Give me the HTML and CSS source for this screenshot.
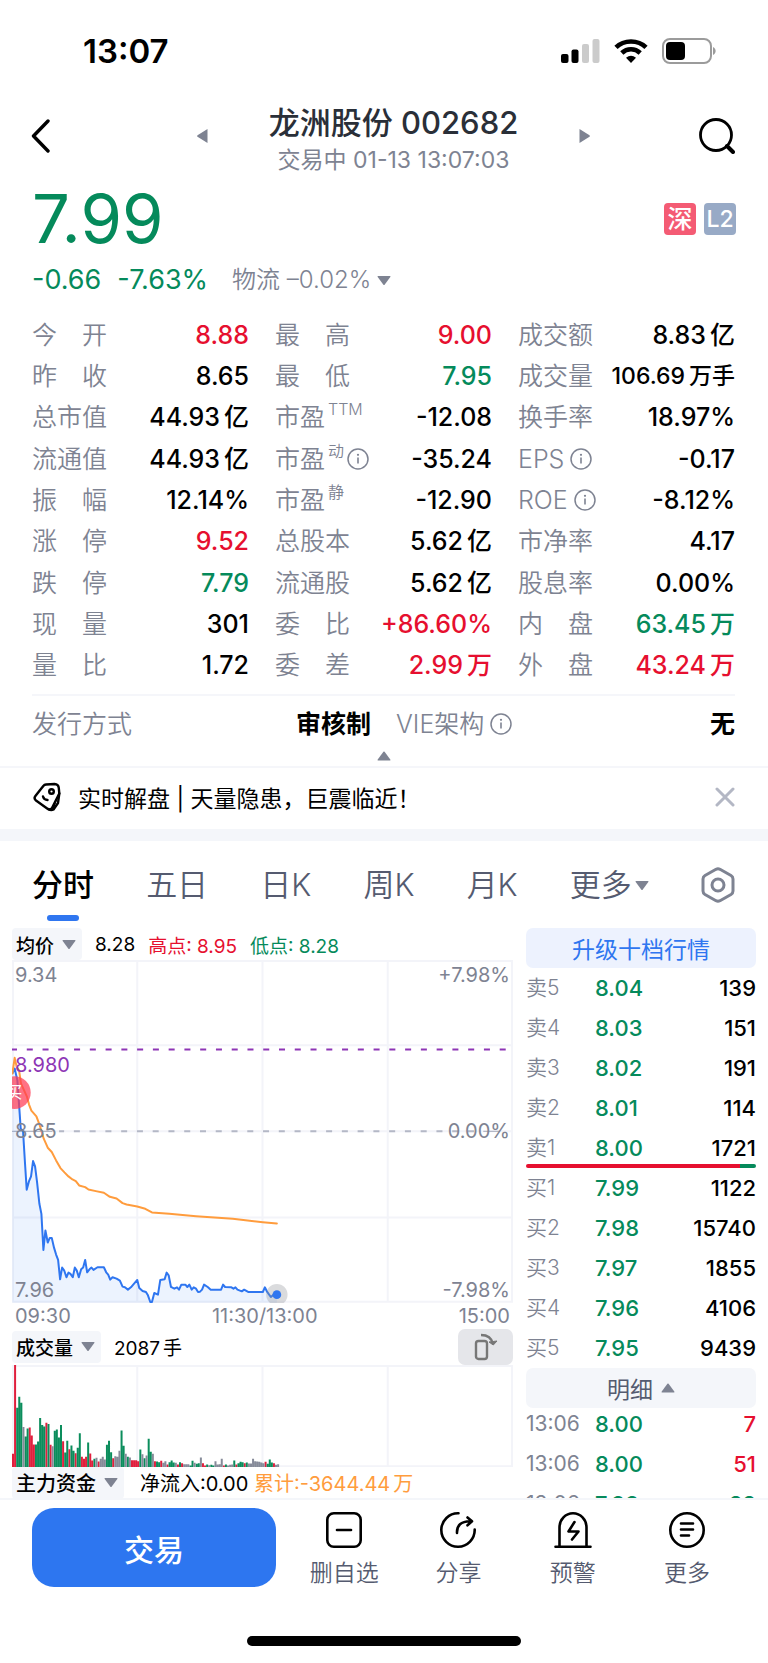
FILE: index.html
```html
<!DOCTYPE html>
<html lang="zh-CN">
<head>
<meta charset="utf-8">
<meta name="viewport" content="width=device-width, initial-scale=1">
<title>龙洲股份 002682</title>
<link rel="stylesheet" href="styles.css">
</head>
<body>
<svg class="defs" aria-hidden="true">
  <symbol id="info" viewBox="0 0 22 22"><circle cx="11" cy="11" r="10" fill="none" stroke="currentColor" stroke-width="1.5"/><path d="M11 9.5v6" stroke="currentColor" stroke-width="1.6"/><circle cx="11" cy="6.8" r="1.1" fill="currentColor"/></symbol>
  <symbol id="down" viewBox="0 0 14 10"><path d="M1 .5h12q.8.2.3 1L7.6 9.2q-.6.6-1.2 0L.7 1.5Q.2.7 1 .5z" fill="currentColor"/></symbol>
  <symbol id="up" viewBox="0 0 14 10"><path d="M1 9.5h12q.8-.2.3-1L7.6.8Q7 .2 6.4.8L.7 8.500Q.2 9.300 1 9.500z" fill="currentColor"/></symbol>
</svg>

<div class="status">
  <span class="clock">13:07</span>
  <span class="status-icons">
    <svg width="39" height="25" viewBox="0 0 39 25"><rect y="15" width="7.500" height="9" rx="2"/><rect x="10.500" y="10.500" width="7" height="13.500" rx="2"/><g fill="#cbcbcb"><rect x="21" y="5" width="7" height="19" rx="2"/><rect x="31.500" y="0" width="7" height="24" rx="2"/></g></svg>
    <svg width="34" height="25" viewBox="0 0 34 25"><g fill="none" stroke="#000" stroke-width="4.600"><path d="M2 8.300C10 .500 24 .500 32 8.300"/><path d="M7.800 14C13 9 21 9 26.200 14"/></g><path d="M17 24l-5-5.200q5-4 10 0z"/></svg>
    <svg width="54" height="26" viewBox="0 0 54 26"><rect x="1" y="1" width="48" height="24" rx="7" fill="none" stroke="#9b9b9b" stroke-width="2"/><rect x="4" y="4" width="19" height="18" rx="4"/><path d="M51 9c3.500 1.500 3.500 6.500 0 8z" fill="#9b9b9b"/></svg>
  </span>
</div>

<header class="header">
  <button class="icon-btn" aria-label="返回"><svg width="20" height="34" viewBox="0 0 20 34"><path d="M17 2L2.500 17 17 32" fill="none" stroke="#000" stroke-width="3.400" stroke-linecap="round" stroke-linejoin="round"/></svg></button>
  <button class="icon-btn prev" aria-label="上一只"><svg width="11" height="14" viewBox="0 0 11 14"><path d="M10.500 0v14L.5 7.800q-.6-.8 0-1.600z" fill="#7e8392"/></svg></button>
  <div class="title">
    <h1>龙洲股份 002682</h1>
    <p>交易中 01-13 13:07:03</p>
  </div>
  <button class="icon-btn next" aria-label="下一只"><svg width="11" height="14" viewBox="0 0 11 14"><path d="M.5 0v14l10-6.200q.6-.8 0-1.600z" fill="#7e8392"/></svg></button>
  <button class="icon-btn" aria-label="搜索"><svg width="36" height="36" viewBox="0 0 36 36"><circle cx="17" cy="17" r="15.500" fill="none" stroke="#000" stroke-width="2.800"/><path d="M28 28l6 6" stroke="#000" stroke-width="4" stroke-linecap="round"/></svg></button>
</header>

<section class="quote">
  <div class="price-row"><strong class="price">7.99</strong><span class="badges"><span class="badge sz">深</span><span class="badge l2">L2</span></span></div>
  <div class="change"><span class="g">-0.66</span><span class="g">-7.63%</span><span class="sector">物流 –0.02% <svg width="14" height="11"><use href="#down"/></svg></span></div>
</section>

<section class="stats">
  <dl>
    <div><dt>今　开</dt><dd class="r">8.88</dd></div>
    <div><dt>昨　收</dt><dd>8.65</dd></div>
    <div><dt>总市值</dt><dd>44.93<b>亿</b></dd></div>
    <div><dt>流通值</dt><dd>44.93<b>亿</b></dd></div>
    <div><dt>振　幅</dt><dd>12.14%</dd></div>
    <div><dt>涨　停</dt><dd class="r">9.52</dd></div>
    <div><dt>跌　停</dt><dd class="g">7.79</dd></div>
    <div><dt>现　量</dt><dd>301</dd></div>
    <div><dt>量　比</dt><dd>1.72</dd></div>
  </dl>
  <dl>
    <div><dt>最　高</dt><dd class="r">9.00</dd></div>
    <div><dt>最　低</dt><dd class="g">7.95</dd></div>
    <div><dt>市盈<sup>TTM</sup></dt><dd>-12.08</dd></div>
    <div><dt>市盈<sup>动</sup><svg class="info"><use href="#info"/></svg></dt><dd>-35.24</dd></div>
    <div><dt>市盈<sup>静</sup></dt><dd>-12.90</dd></div>
    <div><dt>总股本</dt><dd>5.62<b>亿</b></dd></div>
    <div><dt>流通股</dt><dd>5.62<b>亿</b></dd></div>
    <div><dt>委　比</dt><dd class="r">+86.60%</dd></div>
    <div><dt>委　差</dt><dd class="r">2.99<b>万</b></dd></div>
  </dl>
  <dl>
    <div><dt>成交额</dt><dd>8.83<b>亿</b></dd></div>
    <div><dt>成交量</dt><dd class="small">106.69<b>万手</b></dd></div>
    <div><dt>换手率</dt><dd>18.97%</dd></div>
    <div><dt>EPS<svg class="info gap"><use href="#info"/></svg></dt><dd>-0.17</dd></div>
    <div><dt>ROE<svg class="info gap"><use href="#info"/></svg></dt><dd>-8.12%</dd></div>
    <div><dt>市净率</dt><dd>4.17</dd></div>
    <div><dt>股息率</dt><dd>0.00%</dd></div>
    <div><dt>内　盘</dt><dd class="g">63.45<b>万</b></dd></div>
    <div><dt>外　盘</dt><dd class="r">43.24<b>万</b></dd></div>
  </dl>
</section>

<dl class="extra">
  <div><dt>发行方式</dt><dd>审核制</dd></div>
  <div><dt>VIE架构<svg class="info gap"><use href="#info"/></svg></dt><dd>无</dd></div>
</dl>
<button class="collapse" aria-label="收起"><svg width="14" height="10"><use href="#up"/></svg></button>

<div class="notice">
  <svg width="30" height="30" viewBox="0 0 30 30" fill="none" stroke="#000" stroke-width="2.400" stroke-linejoin="round" stroke-linecap="round"><path d="M14 2.500l8.500-.5q4 .2 4.300 4l.5 5.500L20 26q-2 2.500-4.500.8L4 18.500q-2.500-2-.6-4.500L11.300 4Q12.400 2.700 14 2.500z"/><path d="M27.300 11.500L26 21l-4.500 6.500q-2.500 1.500-5.200-.5"/><path d="M24 18l-2.500 8" stroke-width="1.600"/><circle cx="19.500" cy="9.500" r="2.300"/><path d="M11 14.500q1 3.500 4.500 3.500"/></svg>
  <a href="#">实时解盘 | 天量隐患，巨震临近！</a>
  <button class="icon-btn" aria-label="关闭"><svg width="20" height="20" viewBox="0 0 20 20"><path d="M2 2l16 16M18 2L2 18" stroke="#b3b7c4" stroke-width="3" stroke-linecap="round"/></svg></button>
</div>

<nav class="tabs">
  <button class="active">分时</button><button>五日</button><button>日K</button><button>周K</button><button>月K</button>
  <button>更多<svg width="14" height="11"><use href="#down"/></svg></button>
  <button aria-label="设置"><svg class="gear" width="34" height="36" viewBox="0 0 34 36" fill="none" stroke="#7e8392" stroke-width="3" stroke-linejoin="round"><path d="M15 2.300q2-1 4 0l11 6.200q2 1.200 2 3.400v12.200q0 2.200-2 3.400l-11 6.200q-2 1-4 0L4 27.500q-2-1.200-2-3.400V11.900q0-2.200 2-3.400z"/><circle cx="17" cy="18" r="6"/></svg></button>
</nav>

<main class="market">
  <section class="charts">
    <div class="chart-head">
      <button class="pick">均价<svg width="14" height="11"><use href="#down"/></svg></button>
      <span>8.28</span><span class="r">高点: 8.95</span><span class="g">低点: 8.28</span>
    </div>
    <div class="plot">
      <svg viewBox="39 120 1500 1026">
        <g stroke="#f3f4f9" stroke-width="6" fill="none"><path d="M42 123H1536V1143H42zM414 120V1146M789 120V1146M1164 120V1146M39 375H1539M39 633H1539M39 891H1539"/></g>
        <path d="M39 388H1539" stroke="#8d35b5" stroke-width="6" stroke-dasharray="18 29.200" stroke-dashoffset="3"/>
        <path d="M180 633H1440" stroke="#b4b8c6" stroke-width="6" stroke-dasharray="18 29.200" stroke-dashoffset="3"/>
        <path d="M39 633H160M1450 633H1500" stroke="#b4b8c6" stroke-width="4"/>
        <path id="area" fill="#2f76f0" fill-opacity=".09"/>
        <path id="line" fill="none" stroke="#2f76f0" stroke-width="6" stroke-linejoin="round"/>
        <path fill="none" stroke="#ff9c3d" stroke-width="6" stroke-linejoin="round" stroke-linecap="round" d="M40 460L47 413 53 440 60 450 66 490 84 530 90 553 97 571 112 588 121 612 134 655 146 682 158 695 171 720 184 743 196 756 208 768 220 777 230 782 240 795 258 800 268 807 290 812 314 817 332 829 352 834 370 848 382 852 414 858 438 865 458 876 510 880 590 887 700 895 790 905 832 909"/>
        <circle cx="832" cy="1122" r="32" fill="#8c8f96" fill-opacity=".32"/><circle cx="832" cy="1122" r="13" fill="#2f76f0"/>
        <circle cx="46" cy="517" r="49" fill="#ff3b54" fill-opacity=".72"/>
        <text class="buy" x="46" y="534" text-anchor="middle">买</text>
      </svg>
      <span class="tag t1">9.34</span><span class="tag t2">8.980</span><span class="tag t3">8.65</span><span class="tag t4">7.96</span>
      <span class="tag t1 end">+7.98%</span><span class="tag t3 end">0.00%</span><span class="tag t4 end">-7.98%</span>
    </div>
    <div class="axis"><span>09:30</span><span>11:30/13:00</span><span>15:00</span></div>
    <div class="chart-head vol-head">
      <button class="pick">成交量<svg width="14" height="11"><use href="#down"/></svg></button>
      <span>2087<b>手</b></span>
      <button class="rotate" aria-label="横屏"><svg width="24" height="28" viewBox="0 0 24 28" fill="none" stroke="#777" stroke-width="2.400"><rect x="2" y="8" width="11" height="18" rx="2.500"/><path d="M7 2q10 0 12 9"/><path d="M15 9l4.300 3L23 8z" fill="#777" stroke-width="1"/></svg></button>
    </div>
    <svg class="volume" viewBox="0 0 1500 306">
      <path d="M3 3H1497V303H3zM375 0V306M750 0V306M1125 0V306" stroke="#f3f4f9" stroke-width="6" fill="none"/>
      <g fill="none" stroke-width="6"><path id="vr" stroke="#e01f3d"/><path id="vg" stroke="#0b8d5c"/><path id="vk" stroke="#868b99"/></g>
    </svg>
    <div class="chart-head flow-head">
      <button class="pick">主力资金<svg width="14" height="11"><use href="#down"/></svg></button>
      <span>净流入:0.00 <em>累计:-3644.44<b>万</b></em></span>
    </div>
  </section>

  <section class="book">
    <button class="upgrade">升级十档行情</button>
    <table>
      <tr><th>卖5</th><td>8.04</td><td>139</td></tr>
      <tr><th>卖4</th><td>8.03</td><td>151</td></tr>
      <tr><th>卖3</th><td>8.02</td><td>191</td></tr>
      <tr><th>卖2</th><td>8.01</td><td>114</td></tr>
      <tr><th>卖1</th><td>8.00</td><td>1721</td></tr>
    </table>
    <div class="ratio"></div>
    <table>
      <tr><th>买1</th><td>7.99</td><td>1122</td></tr>
      <tr><th>买2</th><td>7.98</td><td>15740</td></tr>
      <tr><th>买3</th><td>7.97</td><td>1855</td></tr>
      <tr><th>买4</th><td>7.96</td><td>4106</td></tr>
      <tr><th>买5</th><td>7.95</td><td>9439</td></tr>
    </table>
    <button class="detail">明细<svg width="14" height="10"><use href="#up"/></svg></button>
    <table class="ticks">
      <tr><th>13:06</th><td>8.00</td><td class="r">7</td></tr>
      <tr><th>13:06</th><td>8.00</td><td class="r">51</td></tr>
      <tr><th>13:06</th><td>7.99</td><td class="g">22</td></tr>
    </table>
  </section>
</main>

<footer class="bottom">
  <div class="actions">
    <button class="trade">交易</button>
    <button class="act"><svg viewBox="0 0 38 38"><rect x="2.300" y="2.300" width="33.400" height="33.400" rx="6.500"/><path d="M12 19h14"/></svg>删自选</button>
    <button class="act"><svg viewBox="0 0 38 38"><path d="M19.500 2.300A16.700 16.700 0 1 0 35.700 18.500M18 22q-.5-11.500 13-11.800M28.500 6.500l4.500 3.800-4.500 4"/></svg>分享</button>
    <button class="act"><svg viewBox="0 0 38 38"><path d="M1.500 35.700h35M5.500 35V16.500a13.500 14.200 0 0 1 27 0V35M20.500 11l-6 9.500h10l-6.500 8"/></svg>预警</button>
    <button class="act"><svg viewBox="0 0 38 38"><circle cx="19" cy="19" r="16.700"/><path d="M13 12.500h12M13 18.500h12M13 24.500h8"/></svg>更多</button>
  </div>
  <div class="home"></div>
</footer>
<script src="chart.js"></script>
</body>
</html>
```
FILE: chart.js
```js
// Intraday price points, x then y, in plot units.
const price = '40,460 47,445 55,480 62,580 65,625 72,632 78,730 83,808 90,782 96,768 102,722 108,738 114,785 121,850 127,880 133,988 139,930 146,966 152,952 158,952 165,982 171,1002 177,1018 183,1076 189,1041 195,1049 202,1070 208,1056 214,1060 221,1070 227,1041 233,1050 239,1070 246,1046 252,1041 258,1018 264,1055 271,1046 277,1041 283,1048 295,1040 314,1040 321,1055 327,1062 333,1077 340,1070 352,1074 362,1080 370,1098 377,1100 386,1107 395,1100 414,1078 420,1102 430,1111 440,1114 446,1124 453,1144 458,1144 465,1117 476,1122 483,1078 496,1076 502,1056 508,1064 515,1099 525,1104 533,1100 539,1107 546,1092 558,1092 564,1099 570,1092 577,1107 583,1100 590,1104 596,1114 602,1113 608,1107 614,1092 625,1099 634,1107 665,1107 671,1092 677,1099 696,1100 702,1104 708,1100 714,1107 727,1112 734,1107 746,1114 790,1114 796,1100 802,1112 814,1129 822,1122 832,1122';
document.getElementById('line').setAttribute('d', 'M' + price);
document.getElementById('area').setAttribute('d', 'M' + price + ' V1146 H40z');

// One entry per minute: direction (r up, g down, k flat) and bar height.
const volume = 'r40 r308 g178 g211 g193 k120 g92 g116 r119 r95 r68 g68 g77 g147 g126 g122 r133 g129 r67 k63 g109 g113 g89 g126 r78 g44 g79 r54 g65 g49 r42 g58 g102 r31 r25 r31 g74 r41 r20 g25 k28 r17 k25 k31 k23 g67 g79 g45 r27 k33 k31 k49 g110 g64 k40 g31 k29 r21 r21 r21 r18 g53 k39 g27 k35 g85 g46 k40 r18 g17 g15 r19 k13 k18 r8 g15 g20 g14 k13 r8 g15 r12 k9 k9 k9 g5 g19 k13 g10 g12 k29 r12 r5 g8 k6 g7 g5 k18 k8 k9 k25 r5 g8 k5 k7 k8 g20 r8 g12 g16 g15 r12 g14 k11 k11 k25 k18 k17 k16 k14 k12 r16 g10 g23 g14 r12 k7 k9';
const paths = { r: '', g: '', k: '' };
volume.split(' ').forEach((bar, i) => {
  paths[bar[0]] += `M${i * 6.25 + 3} 306v-${bar.slice(1)}`;
});
for (const key in paths) document.getElementById('v' + key).setAttribute('d', paths[key]);
```
FILE: styles.css
```css
* { box-sizing: border-box; }
body {
  margin: 0; height: 100vh; display: flex; flex-direction: column; background: #fff; color: #000;
  font-family: Inter, "Noto Sans CJK SC", sans-serif;
}
button { font: inherit; color: inherit; border: 0; background: none; padding: 0; margin: 0; }
h1, p, dl, dd { margin: 0; }
svg { display: block; flex: none; }
b, em { font-weight: inherit; font-style: normal; }
b { margin-left: 4px; }
.defs { position: absolute; width: 0; height: 0; }
.r { color: #e60f2f; }
.g { color: #058a5b; }

.status { display: flex; justify-content: space-between; align-items: center; height: 102px; padding: 0 52px 0 83px; flex: none; }
.clock { font-size: 33px; font-weight: 600; }
.status-icons { display: flex; gap: 14px; align-items: center; }

.header { display: flex; justify-content: space-between; align-items: center; padding: 0 33px 0 31px; flex: none; }
.icon-btn { padding-bottom: 6px; }
.title { text-align: center; }
.title h1 { font-size: 31px; line-height: 42px; font-weight: 500; color: #2a2f38; }
.title p { font-size: 23px; line-height: 32px; color: #7e8392; }
.prev { margin-left: 86px; }
.next { margin-right: 49px; }

.quote { padding: 7px 32px 0; flex: none; }
.price-row { display: flex; justify-content: space-between; align-items: center; }
.price { font-size: 67px; line-height: 72px; font-weight: 400; color: #058a5b; }
.badges { display: flex; gap: 8px; }
.badge { width: 32px; height: 32px; border-radius: 4px; color: #fff; font-size: 25px; line-height: 32px; text-align: center; }
.sz { background: #f45b74; font-weight: 500; }
.l2 { background: #98aac6; font-weight: 500; font-size: 23px; }
.change { display: flex; align-items: center; gap: 16px; font-size: 27px; line-height: 36px; padding-top: 7px; }
.sector { display: flex; align-items: center; gap: 6px; margin-left: 8px; font-size: 24px; font-weight: 350; color: #7e8392; }

.stats { display: grid; grid-template-columns: repeat(3, 1fr); column-gap: 26px; padding: 16px 0 8px; margin: 0 33px 0 32px; border-bottom: 2px solid #f5f6fa; flex: none; }
.stats dl { display: grid; grid-auto-rows: 1fr; min-height: 372px; }
.stats dl div, .extra div { display: flex; justify-content: space-between; align-items: center; }
dt { display: flex; align-items: center; font-size: 25px; line-height: 36px; font-weight: 350; color: #7e8392; white-space: nowrap; }
dd { font-size: 25px; line-height: 36px; font-weight: 500; white-space: nowrap; }
dd.small { font-size: 23px; }
sup { font-size: 16px; line-height: 20px; align-self: flex-start; margin-left: 3px; }
.info { width: 22px; height: 22px; margin-left: 3px; }
.info.gap { margin-left: 6px; }
.extra { display: grid; grid-template-columns: 1fr 1fr; column-gap: 25px; padding: 10px 33px 0 32px; flex: none; }
.extra dd { font-weight: 700; }
.collapse { display: flex; justify-content: center; padding: 9px 0 5px; border-bottom: 2px solid #f5f6fa; color: #7e8392; flex: none; }

.notice { display: flex; align-items: center; height: 73px; padding: 0 33px 3px 32px; border-bottom: 12px solid #f4f6fa; flex: none; }
.notice a { flex: 1; margin-left: 16px; color: #000; text-decoration: none; font-size: 23px; }
.notice .icon-btn { padding: 0; }

.tabs { display: flex; justify-content: space-between; padding: 22px 33px 0 32px; height: 87px; font-size: 31px; line-height: 44px; color: #555b70; flex: none; }
.tabs button { display: flex; align-items: center; gap: 3px; height: 44px; font-weight: 350; }
.tabs button.active { position: relative; color: #000; font-weight: 500; }
.tabs .active::after { content: ""; position: absolute; left: 50%; margin-left: -16px; bottom: -14px; width: 32px; height: 6px; border-radius: 3px; background: #2f76f0; }
.tabs svg { color: #7e8392; }

.market { flex: 1 1 0; min-height: 0; overflow: hidden; display: grid; grid-template-columns: 501fr 230fr; column-gap: 13px; padding: 0 12px; align-items: start; }
.chart-head { display: flex; align-items: center; gap: 13px; height: 32px; font-size: 19px; }
.chart-head b { margin-left: 3px; }
.pick { display: flex; align-items: center; gap: 8px; height: 32px; padding: 0 6px 0 4px; background: #f4f6fa; border-radius: 4px; font-weight: 500; color: #000; }
.pick svg { color: #7e8392; }
.plot { position: relative; overflow: hidden; }
.plot svg, .volume { width: 100%; height: auto; }
.tag { position: absolute; left: 3px; font-size: 20px; line-height: 24px; color: #7e8392; }
.tag.end { left: auto; right: 3px; }
.t1 { top: 3px; }
.t2 { top: 27%; color: #8d35b5; }
.t3 { top: 50%; margin-top: -12px; }
.t4 { bottom: 1px; }
.buy { font-size: 48px; fill: #fff; }
.axis { display: flex; justify-content: space-between; padding: 0 3px; font-size: 20px; line-height: 26px; color: #7e8392; }
.vol-head { height: 36px; }
.rotate { margin-left: auto; display: flex; align-items: center; justify-content: center; width: 55px; height: 36px; background: #e5e6ea; border-radius: 7px; }
.flow-head { gap: 16px; font-size: 20px; }
.flow-head em { color: #ff9c3d; }

.book { min-width: 0; }
.upgrade, .detail { display: flex; align-items: center; justify-content: center; gap: 8px; width: 100%; height: 40px; border-radius: 7px; font-size: 23px; }
.upgrade { background: #edf2fe; color: #2f76f0; }
.detail { background: #f4f6fa; color: #555b70; }
.detail svg { color: #7e8392; }
table { width: 100%; border-collapse: collapse; table-layout: fixed; font-size: 22px; }
th, td { height: 40px; padding: 0; text-align: left; font-weight: 500; line-height: 32px; }
th { width: 30%; font-weight: 350; color: #7e8392; font-size: 21px; }
td:nth-child(2) { color: #058a5b; }
td:last-child { text-align: right; }
td.r:last-child { color: #e60f2f; }
td.g:last-child { color: #058a5b; }
.ratio { height: 4px; margin-top: -4px; border-radius: 2px; background: linear-gradient(90deg, #e60f2f 93%, #058a5b 93%); }
.ticks td, .ticks th { padding-bottom: 8px; }
.ticks th { width: 30%; font-weight: 400; }

.bottom { border-top: 2px solid #f4f6fa; padding: 8px 0 17px; flex: none; background: #fff; }
.actions { display: flex; align-items: flex-start; padding: 0 24px 0 32px; }
.trade { width: 244px; height: 79px; border-radius: 22px; background: #2d76f0; color: #fff; font-size: 30px; font-weight: 500; margin-right: 11px; }
.act { flex: 1; display: flex; flex-direction: column; align-items: center; gap: 7px; font-size: 23px; line-height: 34px; font-weight: 350; color: #555b70; padding-top: 3px; }
.act svg { width: 38px; height: 38px; fill: none; stroke: #000; stroke-width: 2.6px; stroke-linecap: round; stroke-linejoin: round; }
.home { width: 274px; height: 10px; margin: 46px auto 0; border-radius: 5px; background: #000; }
```
